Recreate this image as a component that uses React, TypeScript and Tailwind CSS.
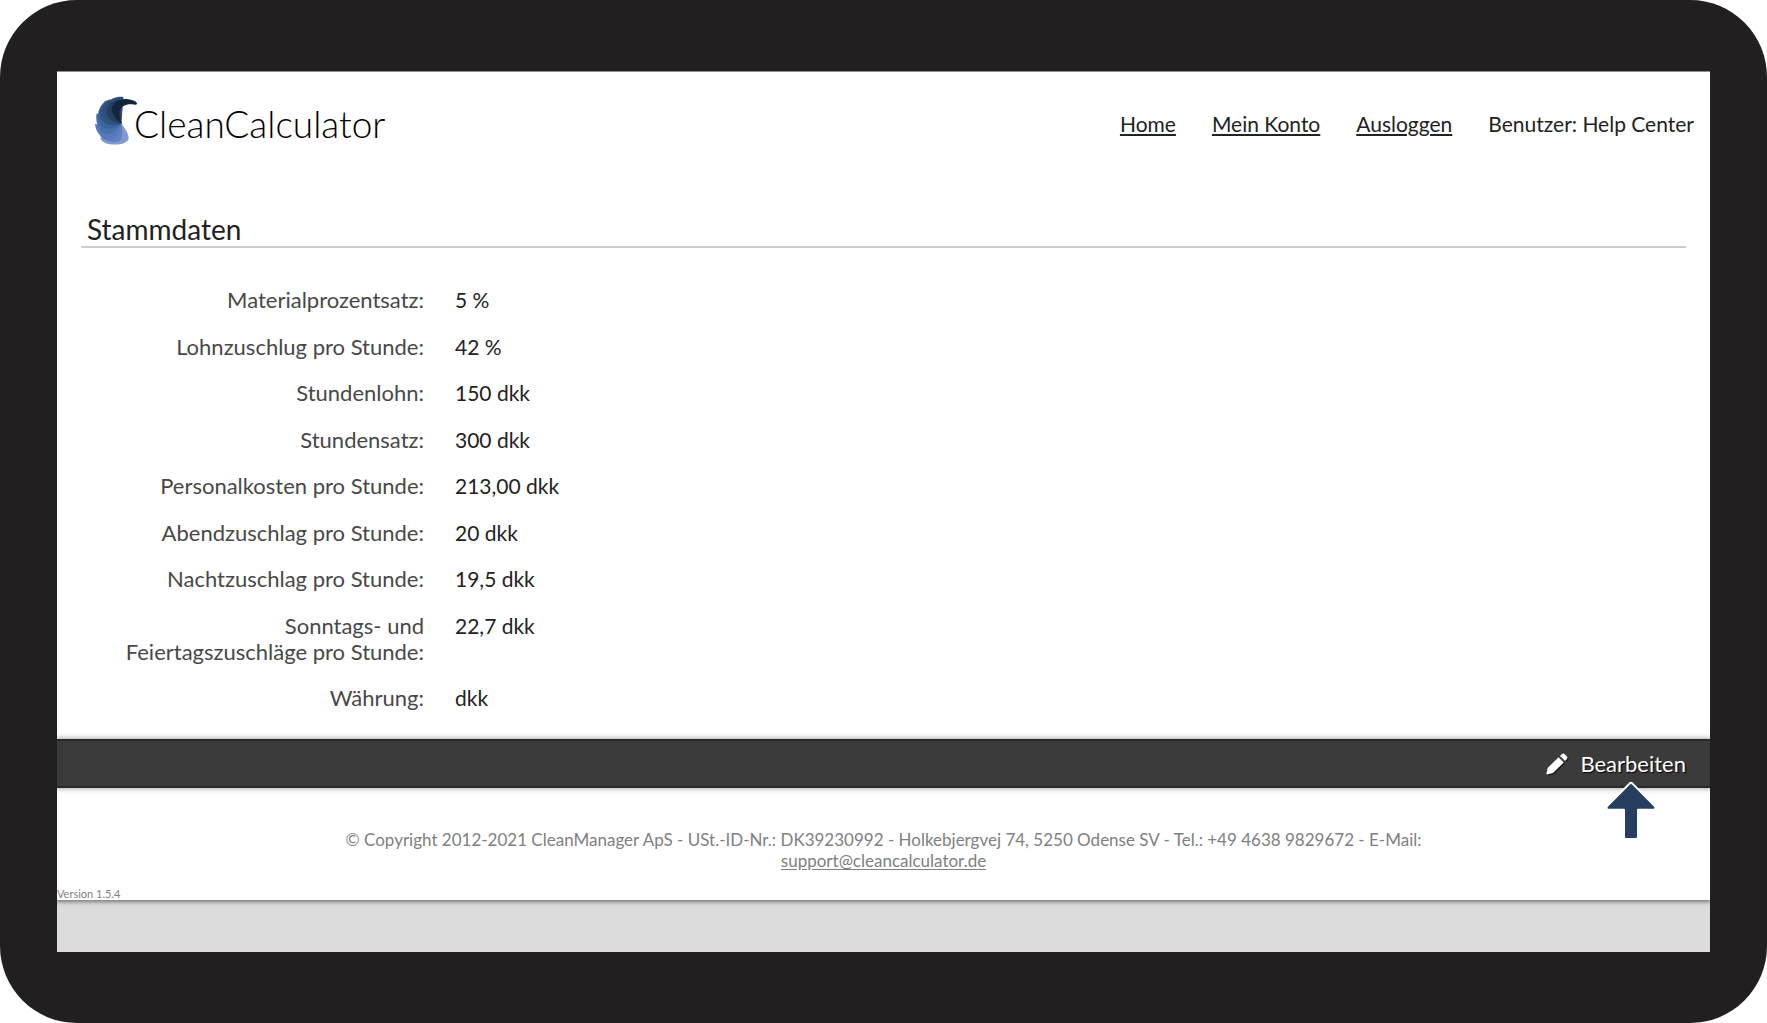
interface MasterDataRow {
  label: string;
  value: string;
}

const rows: MasterDataRow[] = [
  { label: "Materialprozentsatz:", value: "5 %" },
  { label: "Lohnzuschlug pro Stunde:", value: "42 %" },
  { label: "Stundenlohn:", value: "150 dkk" },
  { label: "Stundensatz:", value: "300 dkk" },
  { label: "Personalkosten pro Stunde:", value: "213,00 dkk" },
  { label: "Abendzuschlag pro Stunde:", value: "20 dkk" },
  { label: "Nachtzuschlag pro Stunde:", value: "19,5 dkk" },
  { label: "Sonntags- und Feiertagszuschläge pro Stunde:", value: "22,7 dkk" },
  { label: "Währung:", value: "dkk" },
];

const links = ["Home", "Mein Konto", "Ausloggen"];

// Fan of overlapping blades, lightest at the bottom
function Logo() {
  return (
    <svg viewBox="28 20 132 146" className="-mr-1 h-[49px] w-[44px] shrink-0" aria-hidden="true">
      <path d="M110 102 C122 118 132 134 132 146 C131 158 112 165 90 165 C70 165 52 160 47 146 Z" fill="#8099ce" />
      <path d="M110 102 C113 122 115 142 107 154 C90 163 58 156 46 139 Z" fill="#5f81c4" />
      <path d="M110 102 C108 124 98 146 84 149 C60 153 34 136 31 104 Q34 101 38 106 Z" fill="#557ab9" />
      <path d="M110 102 C98 122 82 135 66 134 C46 130 32 104 35 74 Q38 69 42 76 Z" fill="#4570ad" />
      <path d="M110 102 C92 120 70 122 56 114 C36 98 32 62 60 36 Q70 29 77 34 Z" fill="#3d659d" />
      <path d="M110 102 C90 112 68 108 58 98 C36 84 42 48 74 30 L90 34 Z" fill="#315581" />
      <path d="M110 102 C82 104 58 92 55 72 C50 44 82 20 114 22 Q119 25 116 30 Z" fill="#2e4f7c" />
      <path d="M110 102 C84 98 66 86 65 68 C66 46 82 32 106 29 Z" fill="#263f61" />
      <path d="M110 102 C94 88 80 72 81 57 C85 38 106 26 130 29 C146 31 157 36 157 42 Q156 47 148 45 C128 41 109 49 105 64 C102 78 107 90 112 101 Z" fill="#14243d" />
    </svg>
  );
}

function PencilIcon() {
  return (
    <svg viewBox="0 0 22 22" className="size-[22px] drop-shadow-[1px_1px_0_#111]" fill="currentColor" aria-hidden="true">
      <path d="M12.6 4.2 17.8 9.4 7 20 1.4 21.4Q.3 21.5.4 20.4L1.6 15Z" />
      <path d="M14 2.9 16 1Q17.3 0 18.5 1L21 3.5Q22 4.7 21 6L19.1 8Z" />
    </svg>
  );
}

function ArrowMarker() {
  return (
    <svg viewBox="0 0 52 60" className="absolute top-10 right-[53px] h-[60px] w-[52px]" aria-hidden="true">
      <path
        d="M24.5 2.6Q26 1.2 27.5 2.6L50 25.4Q51.2 28 49 28.8H33V56Q33 58 31 58H21Q19 58 19 56V28.8H3Q.8 28 2 25.4Z"
        fill="#263f61"
        stroke="#fff"
        strokeWidth="2"
        strokeLinejoin="round"
      />
    </svg>
  );
}

export default function App() {
  return (
    <div className="bg-white font-[Lato,'Open_Sans',sans-serif]">
      <div className="flex min-h-screen flex-col rounded-[77px] bg-[#221f20] px-[57px] pt-[71px] pb-[71px]">
        <div className="flex flex-1 flex-col overflow-hidden border-t border-[#8e8c8d] bg-[#dcdcdc] text-[22px] leading-[26px] text-[#222]">
          <div className="bg-white shadow-[0_1px_4px_1px_#777]">
            <header className="flex items-center justify-between pt-6 pr-4 pl-[37px]">
              <a href="#" className="flex items-start text-[37px] leading-[56px] font-light text-black">
                <Logo />
                CleanCalculator
              </a>
              <nav className="flex gap-9 text-[21px]">
                {links.map((link) => (
                  <a key={link} href="#" className="underline decoration-2 underline-offset-2">
                    {link}
                  </a>
                ))}
                <span>Benutzer: Help Center</span>
              </nav>
            </header>

            <main>
              <h1 className="mx-6 mt-[61px] border-b-2 border-[#ccc] pl-1.5 text-[28px] leading-[33px]">
                Stammdaten
              </h1>

              <table className="mt-[39px] mb-[7px] w-full table-fixed">
                <tbody>
                  {rows.map((row) => (
                    <tr key={row.label} className="h-[46px] align-top odd:h-[47px]">
                      <th scope="row" className="w-[367px] pb-5 pl-[50px] text-right font-normal text-[#484848]">
                        {row.label}
                      </th>
                      <td className="pl-[31px] text-[21px]">{row.value}</td>
                    </tr>
                  ))}
                </tbody>
              </table>

              <div className="relative flex h-[49px] items-center justify-end border-y-2 border-[#2a2a2a] bg-[#3b3b3b] pr-6 shadow-[0_0_5px_1px_#aaa]">
                <button type="button" className="flex items-center gap-3 text-white [text-shadow:1px_1px_1px_#000]">
                  <PencilIcon />
                  Bearbeiten
                </button>
                <ArrowMarker />
              </div>
            </main>

            <footer className="pt-[41px] text-[#808080]">
              <p className="mx-auto max-w-[1140px] text-center text-[17px] leading-[21px]">
                © Copyright 2012-2021 CleanManager ApS - USt.-ID-Nr.: DK39230992 - Holkebjergvej 74, 5250 Odense SV - Tel.: +49 4638 9829672 - E-Mail:{" "}
                <a href="mailto:support@cleancalculator.de" className="underline underline-offset-2">
                  support@cleancalculator.de
                </a>
              </p>
              <p className="pt-4 text-[11px] leading-[13px]">Version 1.5.4</p>
            </footer>
          </div>
        </div>
      </div>
    </div>
  );
}
